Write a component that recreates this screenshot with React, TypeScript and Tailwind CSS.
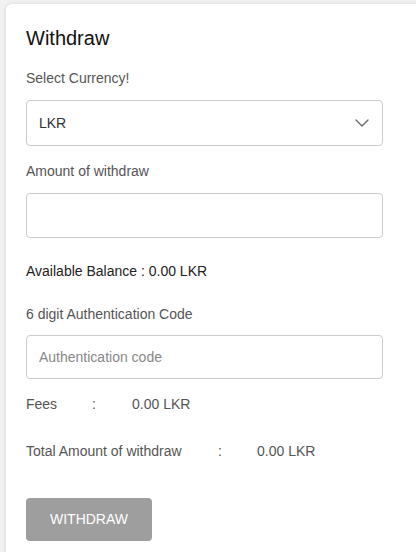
import { ChevronDown } from "lucide-react";

export default function App() {
  return (
    <div className="min-h-screen bg-[#f2f2f2] pt-[4px] pl-[6px] overflow-hidden font-['Liberation_Sans',Arial,sans-serif]">
      <div className="w-[440px] min-h-[560px] bg-white rounded-tl-[6px] shadow-[0_0_4px_rgba(0,0,0,0.12)] pt-[23px] px-5">
        <h2 className="text-[20px] leading-[22px] text-[#111]">Withdraw</h2>

        <p className="mt-[19px] text-[14px] leading-[20px] text-[#555]">Select Currency!</p>
        <div className="mt-[12px] w-[357px] h-[46px] border border-[#ccc] rounded-[4px] flex items-center justify-between pl-3 pr-[8px]">
          <span className="text-[14px] text-[#333]">LKR</span>
          <ChevronDown className="w-6 h-6 text-[#666]" strokeWidth={1.3} />
        </div>

        <p className="mt-[15px] text-[14px] leading-[20px] text-[#555]">Amount of withdraw</p>
        <input
          className="mt-[12px] block w-[357px] h-[45px] border border-[#ccc] rounded-[4px] px-3 text-[14px] outline-none"
          type="text"
        />

        <p className="mt-[23px] text-[14px] leading-[20px] text-[#222]">Available Balance : 0.00 LKR</p>

        <p className="mt-[23px] text-[14px] leading-[20px] text-[#555]">6 digit Authentication Code</p>
        <input
          className="mt-[11px] block w-[357px] h-[44px] border border-[#ccc] rounded-[4px] px-3 text-[14px] outline-none placeholder:text-[#888]"
          type="text"
          placeholder="Authentication code"
        />

        <div className="mt-[15px] flex text-[14px] leading-[20px] text-[#555]">
          <span className="w-[66px]">Fees</span>
          <span className="w-[40px]">:</span>
          <span>0.00 LKR</span>
        </div>

        <div className="mt-[27px] flex text-[14px] leading-[20px] text-[#555]">
          <span className="w-[192px]">Total Amount of withdraw</span>
          <span className="w-[39px]">:</span>
          <span>0.00 LKR</span>
        </div>

        <button className="mt-[37px] w-[126px] h-[43px] bg-[#9e9e9e] rounded-[4px] text-white text-[14px]">
          WITHDRAW
        </button>
      </div>
    </div>
  );
}
